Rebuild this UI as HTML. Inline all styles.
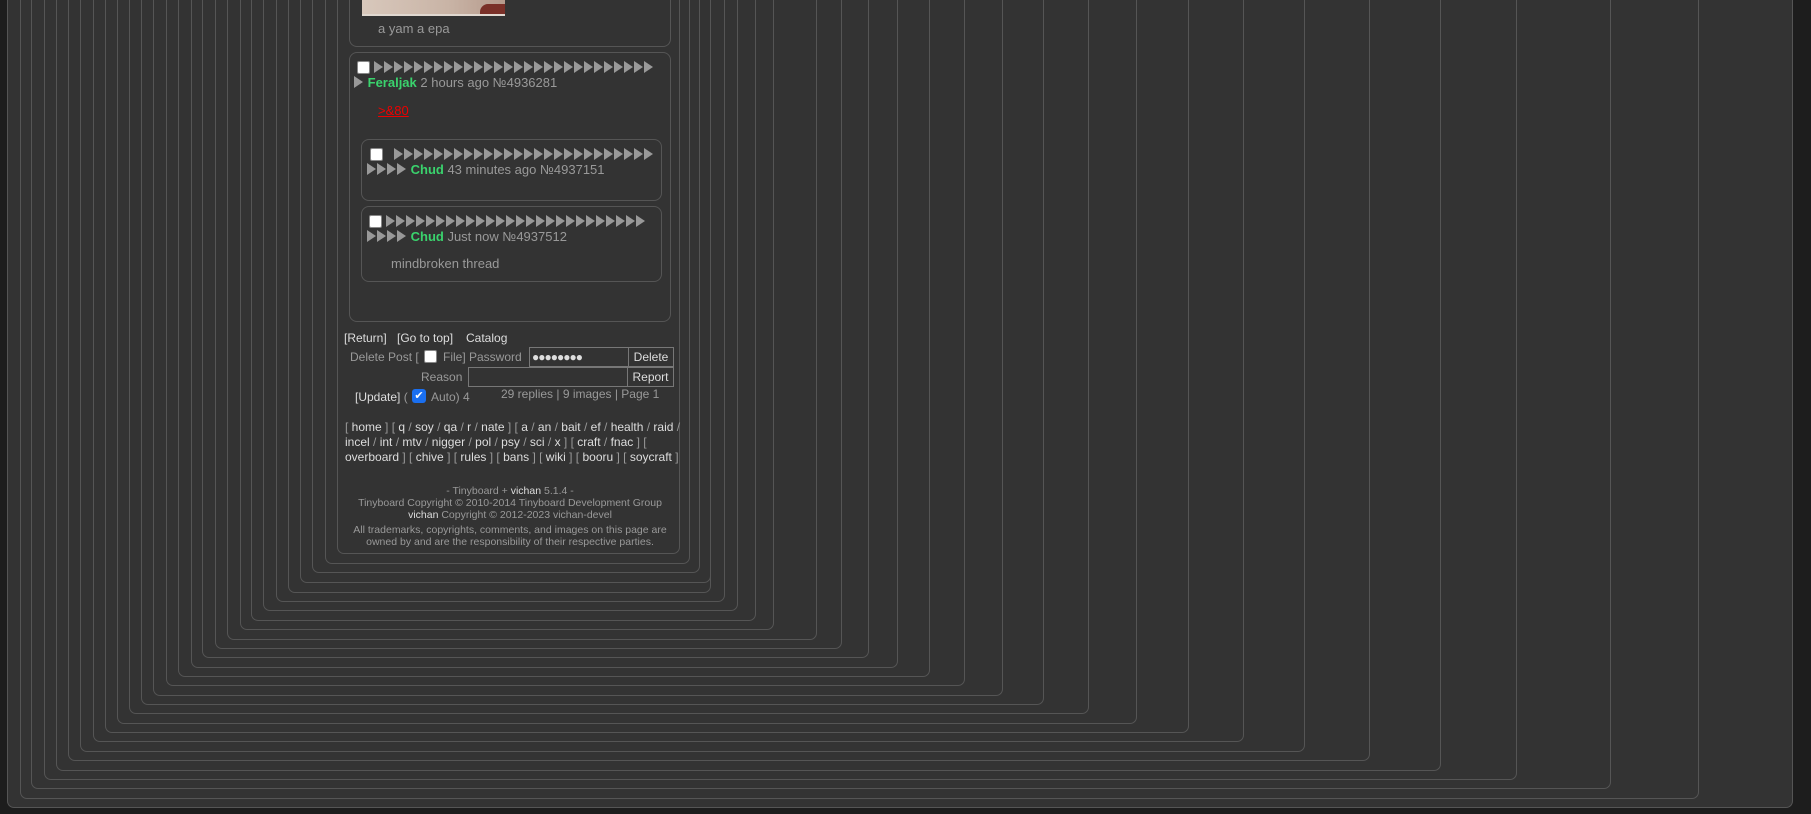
<!DOCTYPE html>
<html><head><meta charset="utf-8"><style>
html,body{margin:0;padding:0;background:#1d1d1d;width:1811px;height:814px;overflow:hidden;position:relative;font-family:"Liberation Sans","DejaVu Sans",sans-serif;}
.b{position:absolute;border:1px solid #555;border-top:none;border-radius:0 0 7px 7px;background:#333;box-sizing:border-box;top:-10px;}
.t{position:absolute;white-space:nowrap;font-size:13px;color:#999;line-height:15px;}
.ar{display:inline-block;white-space:nowrap;line-height:0;vertical-align:-1px;}
.ar i{display:inline-block;width:0;height:0;border-left:9px solid #999;border-top:6px solid transparent;border-bottom:6px solid transparent;margin-right:1px;}
.g{color:#3ad36d;font-weight:bold;}
.cb{position:absolute;width:11px;height:11px;background:#fff;border:1px solid #888;border-radius:2px;}
.post{position:absolute;border:1px solid #555;border-radius:8px;box-sizing:border-box;}
.w{color:#ddd;}
.inp{position:absolute;border:1px solid #777;background:#333;box-sizing:border-box;}
.btn{position:absolute;border:1px solid #777;background:#333;box-sizing:border-box;color:#ddd;font-size:12px;text-align:center;line-height:19px;}
.f{position:absolute;left:340px;width:340px;text-align:center;font-size:10.5px;color:#999;line-height:12px;white-space:nowrap;}
</style></head><body>
<div class="b" style="left:7px;width:1786px;height:818px"></div>
<div class="b" style="left:20px;width:1679px;height:809px"></div>
<div class="b" style="left:31px;width:1580px;height:799px"></div>
<div class="b" style="left:44px;width:1473px;height:790px"></div>
<div class="b" style="left:56px;width:1385px;height:781px"></div>
<div class="b" style="left:68px;width:1302px;height:771px"></div>
<div class="b" style="left:80px;width:1225px;height:762px"></div>
<div class="b" style="left:93px;width:1151px;height:752px"></div>
<div class="b" style="left:105px;width:1084px;height:743px"></div>
<div class="b" style="left:117px;width:1020px;height:734px"></div>
<div class="b" style="left:129px;width:960px;height:724px"></div>
<div class="b" style="left:141px;width:903px;height:715px"></div>
<div class="b" style="left:153px;width:850px;height:706px"></div>
<div class="b" style="left:166px;width:799px;height:696px"></div>
<div class="b" style="left:178px;width:752px;height:687px"></div>
<div class="b" style="left:191px;width:707px;height:678px"></div>
<div class="b" style="left:202px;width:667px;height:668px"></div>
<div class="b" style="left:215px;width:627px;height:659px"></div>
<div class="b" style="left:227px;width:590px;height:650px"></div>
<div class="b" style="left:240px;width:534px;height:640px"></div>
<div class="b" style="left:251px;width:505px;height:631px"></div>
<div class="b" style="left:263px;width:475px;height:621px"></div>
<div class="b" style="left:276px;width:449px;height:612px"></div>
<div class="b" style="left:288px;width:423px;height:603px"></div>
<div class="b" style="left:300px;width:411px;height:593px"></div>
<div class="b" style="left:312px;width:388px;height:583px"></div>
<div class="b" style="left:325px;width:365px;height:574px"></div>
<div class="b" style="left:337px;width:343px;height:564px"></div>

<div class="post" style="left:349px;top:-10px;width:322px;height:57px;border-top:none;border-radius:0 0 8px 8px"></div>
<div style="position:absolute;left:362px;top:0;width:143px;height:16px;background:linear-gradient(90deg,#d8c8bc,#c9b4a6 60%,#b59a8c);"></div>
<div style="position:absolute;left:480px;top:4px;width:25px;height:12px;background:#7a3028;border-radius:8px 0 0 0"></div>
<div style="position:absolute;left:362px;top:14px;width:143px;height:2px;background:#e0d8d0"></div>
<div class="t" style="left:378px;top:21px">a yam a epa</div>

<div class="post" style="left:349px;top:52px;width:322px;height:270px"></div>
<div class="cb" style="left:357px;top:61px"></div>
<div class="t" style="left:374px;top:60px"><span class="ar"><i></i><i></i><i></i><i></i><i></i><i></i><i></i><i></i><i></i><i></i><i></i><i></i><i></i><i></i><i></i><i></i><i></i><i></i><i></i><i></i><i></i><i></i><i></i><i></i><i></i><i></i><i></i><i></i></span></div>
<div class="t" style="left:354px;top:75px"><span class="ar"><i></i></span> <span class="g">Feraljak</span> 2 hours ago №4936281</div>
<div class="t" style="left:378px;top:103px;color:#e00;text-decoration:underline">&gt;&amp;80</div>

<div class="post" style="left:361px;top:139px;width:301px;height:62px"></div>
<div class="cb" style="left:370px;top:148px"></div>
<div class="t" style="left:394px;top:147px"><span class="ar"><i></i><i></i><i></i><i></i><i></i><i></i><i></i><i></i><i></i><i></i><i></i><i></i><i></i><i></i><i></i><i></i><i></i><i></i><i></i><i></i><i></i><i></i><i></i><i></i><i></i><i></i></span></div>
<div class="t" style="left:367px;top:162px"><span class="ar"><i></i><i></i><i></i><i></i></span> <span class="g">Chud</span> 43 minutes ago №4937151</div>

<div class="post" style="left:361px;top:206px;width:301px;height:76px"></div>
<div class="cb" style="left:369px;top:215px"></div>
<div class="t" style="left:386px;top:214px"><span class="ar"><i></i><i></i><i></i><i></i><i></i><i></i><i></i><i></i><i></i><i></i><i></i><i></i><i></i><i></i><i></i><i></i><i></i><i></i><i></i><i></i><i></i><i></i><i></i><i></i><i></i><i></i></span></div>
<div class="t" style="left:367px;top:229px"><span class="ar"><i></i><i></i><i></i><i></i></span> <span class="g">Chud</span> Just now №4937512</div>
<div class="t" style="left:391px;top:256px">mindbroken thread</div>

<div class="t w" style="left:344px;top:331px;font-size:12px">[Return]</div>
<div class="t w" style="left:397px;top:331px;font-size:12px">[Go to top]</div>
<div class="t w" style="left:466px;top:331px;font-size:12px">Catalog</div>
<div class="t" style="left:350px;top:350px;font-size:12px">Delete Post [</div>
<div class="cb" style="left:424px;top:350px;width:11px;height:11px"></div>
<div class="t" style="left:443px;top:350px;font-size:12px">File] Password</div>
<div class="inp" style="left:529px;top:347px;width:100px;height:20px"></div>
<div class="t" style="left:532px;top:350px;font-size:12px;color:#ddd;letter-spacing:-1px">●●●●●●●●</div>
<div class="btn" style="left:628px;top:347px;width:46px;height:20px">Delete</div>
<div class="t" style="left:421px;top:370px;font-size:12px">Reason</div>
<div class="inp" style="left:468px;top:367px;width:160px;height:20px"></div>
<div class="btn" style="left:627px;top:367px;width:47px;height:20px">Report</div>
<div class="t" style="left:355px;top:390px;font-size:12px"><span class="w">[Update]</span> (</div>
<div style="position:absolute;left:412px;top:389px;width:14px;height:14px;background:#1a6ff0;border-radius:3px;color:#fff;font-size:11px;line-height:14px;text-align:center;font-family:'DejaVu Sans'">✔</div>
<div class="t" style="left:431px;top:390px;font-size:12px">Auto) 4</div>
<div class="t" style="left:501px;top:387px;font-size:12px">29 replies | 9 images | Page 1</div>
<div class="t" style="left:345px;top:420px;font-size:12px">[ <span class="w">home</span> ] [ <span class="w">q</span> / <span class="w">soy</span> / <span class="w">qa</span> / <span class="w">r</span> / <span class="w">nate</span> ] [ <span class="w">a</span> / <span class="w">an</span> / <span class="w">bait</span> / <span class="w">ef</span> / <span class="w">health</span> / <span class="w">raid</span> /</div>
<div class="t" style="left:345px;top:435px;font-size:12px"><span class="w">incel</span> / <span class="w">int</span> / <span class="w">mtv</span> / <span class="w">nigger</span> / <span class="w">pol</span> / <span class="w">psy</span> / <span class="w">sci</span> / <span class="w">x</span> ] [ <span class="w">craft</span> / <span class="w">fnac</span> ] [</div>
<div class="t" style="left:345px;top:450px;font-size:12px"><span class="w">overboard</span> ] [ <span class="w">chive</span> ] [ <span class="w">rules</span> ] [ <span class="w">bans</span> ] [ <span class="w">wiki</span> ] [ <span class="w">booru</span> ] [ <span class="w">soycraft</span> ]</div>
<div class="f" style="top:485px">- Tinyboard + <span class="w">vichan</span> 5.1.4 -</div>
<div class="f" style="top:497px">Tinyboard Copyright © 2010-2014 Tinyboard Development Group</div>
<div class="f" style="top:509px"><span class="w">vichan</span> Copyright © 2012-2023 vichan-devel</div>
<div class="f" style="top:524px">All trademarks, copyrights, comments, and images on this page are</div>
<div class="f" style="top:536px">owned by and are the responsibility of their respective parties.</div>
</body></html>
